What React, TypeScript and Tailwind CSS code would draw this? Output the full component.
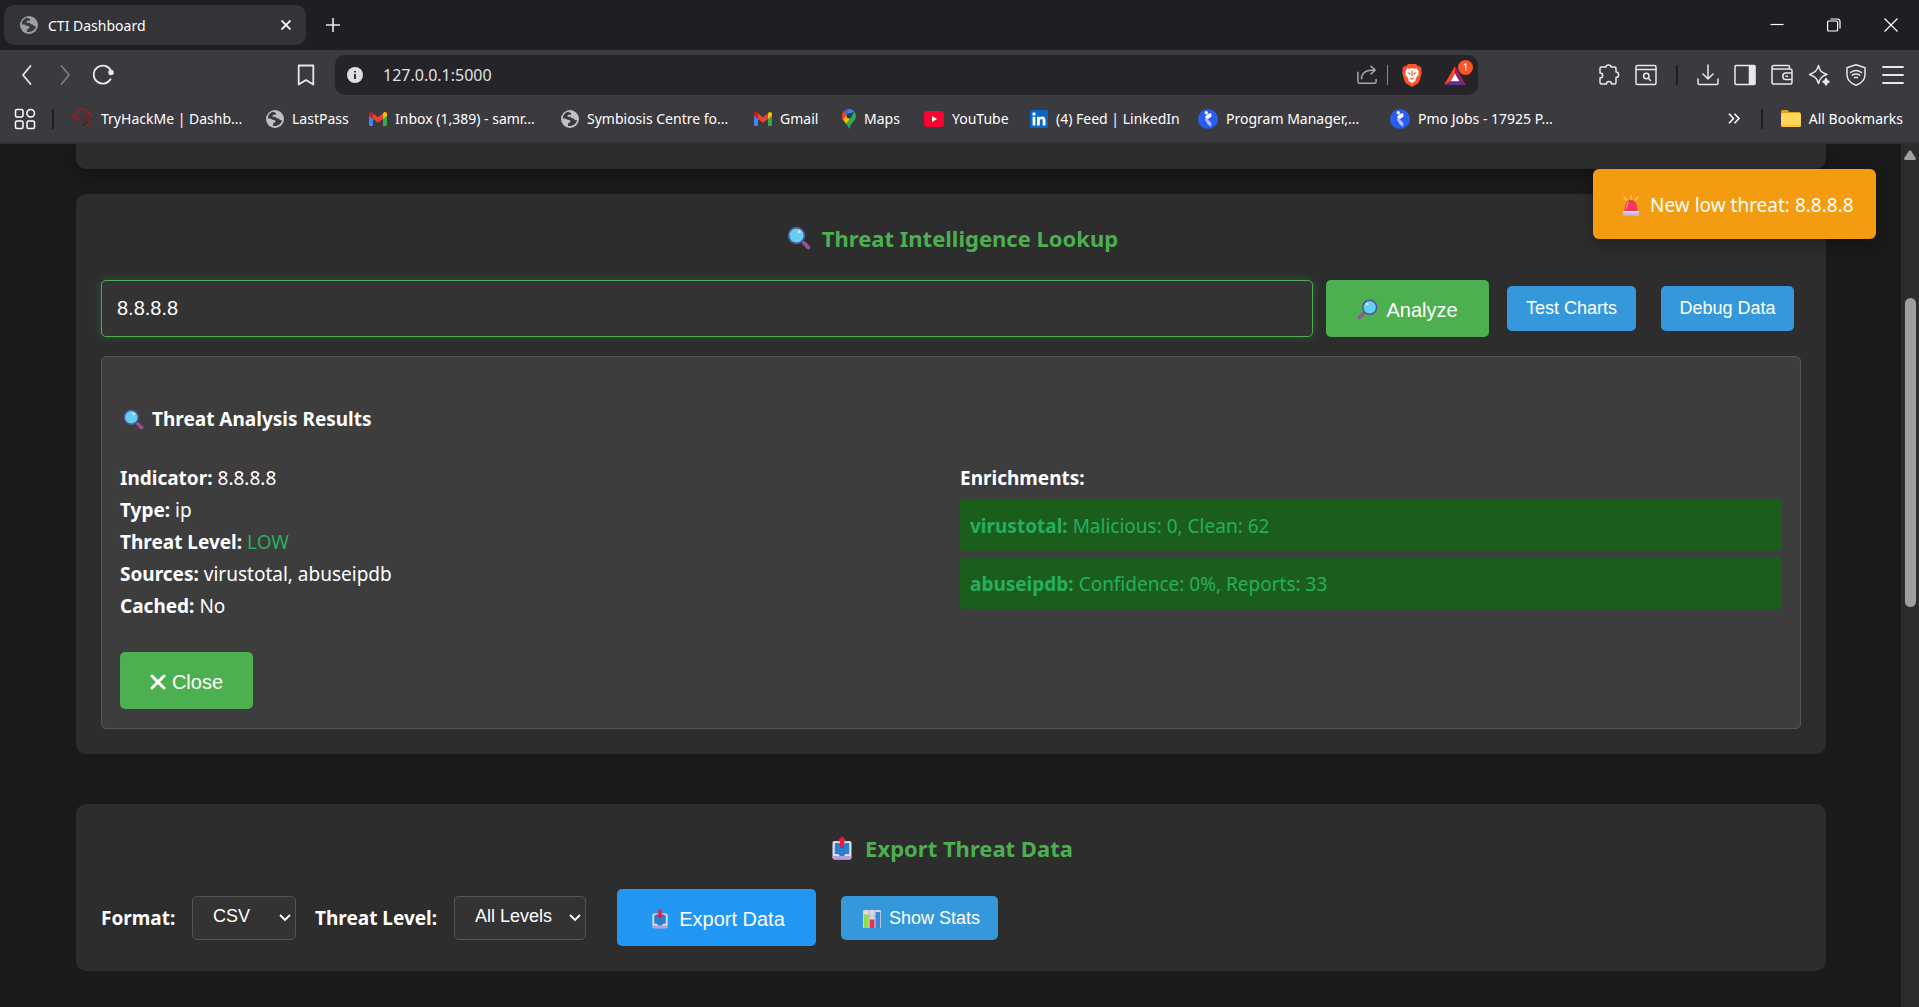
import React, { useState } from "react";

type IconProps = { className?: string };

function GlobeIcon({ className = "" }: IconProps) {
  return (
    <svg viewBox="0 0 18 18" className={`size-[18px] shrink-0 ${className}`} aria-hidden="true">
      <circle cx="9" cy="9" r="9" fill="currentColor" />
      <path
        d="M7 1.8C3.8 2.6 1.9 5.2 1.8 8.4l2.5.1 2.3 1.2 1.9.2 1 1.2-.6 1.3-1.6.6-.4 2.9c4.2.9 8.3-1.6 9.1-5.6l-2.1-.2-1.2-1.5-2-.4-1.3-1.5-2 .2L6.2 6l1.2-1.2h2.3l.6-1.5z"
        fill="#3b3a3f"
      />
      <path d="M10.5 5.2l2.4-.5 1.1 1.1-1.4 1.3-1.8-.4z" fill="currentColor" />
    </svg>
  );
}

function GmailIcon() {
  return (
    <svg viewBox="0 0 18 14" className="h-[14px] w-[18px] shrink-0" aria-hidden="true">
      <path d="M0 2v10.8C0 13.500.500 14 1.200 14H4V5z" fill="#4285f4" />
      <path d="M18 2v10.8c0 .7-.5 1.200-1.200 1.200H14V5z" fill="#34a853" />
      <path d="M4 1.400V7L0 4V2C0 .3 1.900-.6 3.300.500z" fill="#c5221f" />
      <path d="M14 1.400V7l4-3V2c0-1.700-1.900-2.600-3.300-1.500z" fill="#fbbc04" />
      <path d="M4 1.400l5 3.800 5-3.800V7l-5 3.800L4 7z" fill="#ea4335" />
    </svg>
  );
}

function MapsIcon() {
  return (
    <svg viewBox="0 0 14 20" className="h-5 w-[14px] shrink-0" aria-hidden="true">
      <path d="M7 0a7 7 0 0 0-5.400 2.500L5 5.400z" fill="#ea4335" />
      <path d="M7 0L4.600 5.600 9 4l3.500-1.200A7 7 0 0 0 7 0z" fill="#4285f4" />
      <path d="M2.200 2L7 0 4.700 5.200z" fill="#1a73e8" />
      <path d="M1.600 2.500A7 7 0 0 0 .9 10.400L5 5.400z" fill="#ea4335" />
      <path d="M.9 10.400c.7 1.300 2.100 2.800 3.300 4.600L9.500 8.500 4.800 5.800z" fill="#fbbc04" />
      <path d="M12.500 2.800c2.100 3 1.700 6.200-.5 8.900-2.300 2.800-3.700 4.700-5 8.300-.8-2.300-1.700-3.600-2.800-5z" fill="#34a853" />
      <circle cx="7" cy="7" r="2.500" fill="#253a5e" />
    </svg>
  );
}

function YouTubeIcon() {
  return (
    <svg viewBox="0 0 20 16" className="h-4 w-5 shrink-0" aria-hidden="true">
      <rect width="20" height="16" y="0" rx="3.500" fill="#ff0033" />
      <path d="M8 5l5 3-5 3z" fill="#fff" />
    </svg>
  );
}

function LinkedInIcon() {
  return (
    <svg viewBox="0 0 18 18" className="size-[18px] shrink-0" aria-hidden="true">
      <rect width="18" height="18" rx="1.500" fill="#0a66c2" />
      <circle cx="4" cy="4" r="1.700" fill="#fff" />
      <path d="M2.600 6.800h2.800v8.700H2.600zM7 6.800h2.700V8c.5-.8 1.400-1.400 2.600-1.400 2.600 0 3.200 1.700 3.200 4v4.900h-2.800v-4.300c0-1.200-.1-2.200-1.300-2.200-1.300 0-1.600 1-1.600 2.100v4.400H7z" fill="#fff" />
    </svg>
  );
}

function JobsIcon() {
  return (
    <svg viewBox="0 0 20 20" className="size-5 shrink-0" aria-hidden="true">
      <circle cx="10" cy="10" r="10" fill="#275df5" />
      <circle cx="8.300" cy="3.700" r="1.700" fill="#fff" />
      <path d="M13.300 4.300v3.400L9.800 10 7 8.300c1-2.200 3.300-3.900 6.300-4z" fill="#fff" />
      <path d="M7 8.300L9.800 10l3.500 4v3.700C9.800 16 7 13 7 8.300z" fill="#a9c0fb" />
    </svg>
  );
}

function TryHackMeIcon() {
  return (
    <svg viewBox="0 0 20 21" className="h-[21px] w-5 shrink-0" fill="none" stroke="#b3161b" aria-hidden="true">
      <path d="M7 11H4.500C-.3 10.500 0 5.500 4 5.300 4.500-.5 13-.5 14 4.500c4-.5 5.500 3.500 3.500 5.500" strokeWidth="1.300" />
      <path d="M9 9.500h3M13.500 9h3M9 12h6M17 12h2" stroke="#7b1d22" strokeWidth="1.400" />
      <path d="M11 14.500h4M9 17h3" stroke="#2c2b30" strokeWidth="1.500" />
      <path d="M16 14.500h3M13 17h4M10.500 19.500h2M15 19.500h3" stroke="#8b1a1e" strokeWidth="1.300" />
    </svg>
  );
}

function FolderIcon() {
  return (
    <svg viewBox="0 0 20 17" className="h-[17px] w-5 shrink-0" aria-hidden="true">
      <path d="M0 2C0 .9.700 0 1.800 0h4.500l2 2H18c1 0 1.600.8 1.600 1.700V7H0z" fill="#e0a210" />
      <rect y="3" width="20" height="14" rx="1.800" fill="#ffd65c" />
      <path d="M0 14.500V15c0 1.200.8 2 1.800 2h16.400c1 0 1.800-.8 1.800-2v-.5z" fill="#f6c443" />
    </svg>
  );
}

function BraveIcon() {
  return (
    <svg viewBox="0 0 20 23" className="h-[23px] w-5 shrink-0" aria-hidden="true">
      <path d="M6 0h8l1.800 1.900 2.200.3 1.800 3-.6 1.500.6 2-2.300 8.300c-.4 1.400-1.300 2.300-2.500 3.100L10 23l-5-2.900C3.800 19.300 2.900 18.400 2.500 17L.2 8.700l.6-2-.6-1.500 1.800-3 2.200-.3z" fill="#fb542b" />
      <path d="M5.500 4.300l2.300.4L10 4.200l2.200.5 2.300-.4 2.300 3.200-.6 1.900.5 1-2.400 3-.8 1.700.2 1.300L10 19.300l-3.700-2.900.2-1.300-.8-1.700-2.400-3 .5-1-.6-1.900z" fill="#fff" />
      <path d="M5.200 8.300l3.400.8-.6 2zM14.800 8.300l-3.400.8.6 2zM7.800 13.500l2.200 1 2.200-1-.9 1.900h-2.600zM9.600 6h.8l.3 5.500-.7.6-.7-.6z" fill="#fb542b" />
    </svg>
  );
}

function BatIcon() {
  return (
    <svg viewBox="0 0 22 19" className="h-[19px] w-[22px]" aria-hidden="true">
      <path d="M11 0L0 19l6.700-3.800L11 7.500z" fill="#ff4724" />
      <path d="M11 0v7.500l4.300 7.700L22 19z" fill="#9e1f63" />
      <path d="M0 19h22l-6.700-3.800H6.700z" fill="#662d91" />
      <path d="M11 7.500l4.300 7.700H6.700z" fill="#fff" />
    </svg>
  );
}

const line = {
  fill: "none",
  stroke: "currentColor",
  strokeWidth: 1.5,
  strokeLinecap: "round" as const,
  strokeLinejoin: "round" as const,
};

function LineIcon({ children, className = "size-[22px]" }: { children: React.ReactNode; className?: string }) {
  return (
    <svg viewBox="0 0 22 22" className={`shrink-0 ${className}`} aria-hidden="true" {...line}>
      {children}
    </svg>
  );
}

function MagnifierEmoji({ className = "size-6", flip = false }: { className?: string; flip?: boolean }) {
  return (
    <svg viewBox="0 0 24 24" className={`shrink-0 ${className}`} aria-hidden="true">
      <g transform={flip ? "translate(24 0) scale(-1 1)" : undefined}>
        <path d="M14.800 14.800l2 2" stroke="#533566" strokeWidth="2.500" />
        <path d="M17 17l4.300 4.300" stroke="#965190" strokeWidth="4" strokeLinecap="round" />
        <circle cx="9.500" cy="9.500" r="8" fill="#66cff0" stroke="#54529b" strokeWidth="1.800" />
        <circle cx="12.300" cy="5.700" r="1.500" fill="#c9efff" />
      </g>
    </svg>
  );
}

function TrayEmoji({ className, down = false }: { className: string; down?: boolean }) {
  return (
    <svg viewBox="0 0 20 24" className={`shrink-0 ${className}`} aria-hidden="true">
      <rect x=".5" y="5" width="19" height="18.500" rx="2" fill="#e3dcee" />
      <path d="M.5 20h19v1.500a2 2 0 0 1-2 2h-15a2 2 0 0 1-2-2z" fill="#b9a0d2" />
      <path d="M2.800 7h14.400v11h-3.500l-1.700 2H8l-1.700-2H2.800z" fill="#2482d4" />
      {down ? (
        <path d="M8 0h4v6.500h3L10 12 5 6.500h3z" fill="#dc2148" />
      ) : (
        <path d="M10 0l4.600 5.500H12v6.700H8V5.500H5.400z" fill="#dc2148" />
      )}
    </svg>
  );
}

function ChartEmoji() {
  return (
    <svg viewBox="0 0 18 18" className="size-[18px] shrink-0" aria-hidden="true">
      <rect width="18" height="18" rx="1" fill="#ded5e4" />
      <path d="M0 6h18M0 12h18M6.200 0v18M12 0v18" stroke="#b7abc4" strokeWidth=".8" />
      <rect x="1" y="4.500" width="4.600" height="13.500" fill="#93dd48" />
      <rect x="6.800" y="9.500" width="4.600" height="8.500" fill="#e0335f" />
      <rect x="12.600" y="2" width="4.600" height="16" fill="#3289d8" />
    </svg>
  );
}

function SirenEmoji() {
  return (
    <svg viewBox="0 0 18 21" className="h-[21px] w-[18px] shrink-0" aria-hidden="true">
      <path d="M9 .5v3M2 2l2.500 3M16 2l-2.500 3" stroke="#fcd34d" strokeWidth="1.300" strokeLinecap="round" />
      <path d="M3.500 9.500C4 6.500 6 5 9 5s5 1.500 5.500 4.500L16 17H2z" fill="#f8355c" />
      <path d="M6 7.500C5 9 4.800 11 4.600 13" stroke="#ff8494" strokeWidth="1.500" fill="none" strokeLinecap="round" />
      <rect x="1" y="16" width="16" height="4.500" rx=".8" fill="#cdb6e8" />
      <rect x="1" y="16" width="16" height="1.500" fill="#f0e4fa" />
    </svg>
  );
}

const bookmarks = [
  { label: "TryHackMe | Dashb...", icon: <TryHackMeIcon />, width: "w-[193px]" },
  { label: "LastPass", icon: <GlobeIcon className="text-[#bdc1c6]" />, width: "w-[103px]" },
  { label: "Inbox (1,389) - samr...", icon: <GmailIcon />, width: "w-[192px]" },
  { label: "Symbiosis Centre fo...", icon: <GlobeIcon className="text-[#bdc1c6]" />, width: "w-[193px]" },
  { label: "Gmail", icon: <GmailIcon />, width: "w-[88px]" },
  { label: "Maps", icon: <MapsIcon />, width: "w-[82px]" },
  { label: "YouTube", icon: <YouTubeIcon />, width: "w-[106px]" },
  { label: "(4) Feed | LinkedIn", icon: <LinkedInIcon />, width: "w-[168px]" },
  { label: "Program Manager,...", icon: <JobsIcon />, width: "w-[192px]" },
  { label: "Pmo Jobs - 17925 P...", icon: <JobsIcon />, width: "w-[192px]" },
];

function BrowserChrome() {
  return (
    <header className="shrink-0 text-[#e8e8ea]">
      <div className="flex h-[50px] items-center bg-[#1f1e23]">
        <div className="ml-1 flex h-10 w-[302px] items-center rounded-[10px] bg-[#343338] pr-3 pl-4">
          <GlobeIcon className="text-[#9aa0a6]" />
          <span className="ml-[10px] flex-1 text-[14px] text-white">CTI Dashboard</span>
          <button aria-label="Close tab" className="flex size-4 items-center justify-center">
            <svg viewBox="0 0 10 10" className="size-[10px]" stroke="#fff" strokeWidth="1.800"><path d="M.5.500l9 9M9.500.500l-9 9" /></svg>
          </button>
        </div>
        <button aria-label="New tab" className="ml-5 flex size-[14px] items-center justify-center">
          <svg viewBox="0 0 14 14" className="size-[14px]" stroke="currentColor" strokeWidth="1.600"><path d="M7 0v14M0 7h14" /></svg>
        </button>
        <div className="mr-[21px] ml-auto flex items-center gap-[43px]">
          <button aria-label="Minimize"><svg viewBox="0 0 14 14" className="size-[14px]" stroke="#fff" strokeWidth="1.200"><path d="M.5 6.500h13" /></svg></button>
          <button aria-label="Restore">
            <svg viewBox="0 0 14 14" className="size-[14px]" fill="none" stroke="#fff" strokeWidth="1.200">
              <rect x=".6" y="3" width="10" height="10" rx="1" />
              <path d="M3.500 1h7A2.500 2.500 0 0 1 13 3.500v7" />
            </svg>
          </button>
          <button aria-label="Close window"><svg viewBox="0 0 14 14" className="size-[14px]" stroke="#fff" strokeWidth="1.200"><path d="M.5.500l13 13M13.500.500l-13 13" /></svg></button>
        </div>
      </div>

      <div className="flex h-[50px] items-center bg-[#3b3a3f]">
        <div className="ml-4 flex w-[319px] items-center gap-4">
          <button aria-label="Back"><LineIcon><path d="M14.500 2L7 11l7.500 9" strokeWidth="1.800" /></LineIcon></button>
          <button aria-label="Forward" className="text-[#7d7c81]"><LineIcon><path d="M7.500 2l7.500 9-7.500 9" strokeWidth="1.800" /></LineIcon></button>
          <button aria-label="Reload">
            <LineIcon>
              <path d="M18.500 15.200A9 9 0 1 1 19 7" strokeWidth="1.800" />
              <circle cx="19" cy="8.500" r="2" fill="currentColor" />
            </LineIcon>
          </button>
          <button aria-label="Bookmark this page" className="mr-[18px] ml-auto"><LineIcon><path d="M3.700 1.500h14.600v19L11 16l-7.300 4.500z" strokeWidth="1.800" /></LineIcon></button>
        </div>
        <div className="flex h-10 min-w-0 flex-1 items-center rounded-[10px] bg-[#252429] pl-3">
          <svg viewBox="0 0 16 16" className="size-4 shrink-0" aria-hidden="true">
            <circle cx="8" cy="8" r="8" fill="#dfdfe3" />
            <path d="M8 7v5M8 4v1.600" stroke="#252429" strokeWidth="1.800" />
          </svg>
          <input
            aria-label="Address"
            defaultValue="127.0.0.1:5000"
            className="ml-5 min-w-0 flex-1 bg-transparent text-[16px] text-[#e0e0e4] outline-none"
          />
          <button aria-label="Share" className="text-[#a6a5aa]">
            <LineIcon className="size-5"><path d="M1 8v10.500c0 1 .6 1.500 1.500 1.500h17c1 0 1.500-.6 1.500-1.500V16M5 15c0-6 4-9.500 14.500-9.500M15.500 1.500l4.500 4-4.500 4.300" strokeWidth="1.700" /></LineIcon>
          </button>
          <span className="ml-[10px] h-5 w-px bg-[#8b8a8f]" />
          <button aria-label="Brave Shields" className="ml-[14px]"><BraveIcon /></button>
          <button aria-label="Brave Rewards" className="relative mr-3 ml-[22px]">
            <BatIcon />
            <span className="absolute -top-[6px] -right-[7px] flex size-[15px] items-center justify-center rounded-full bg-[#fb542b] text-[10px] text-white">1</span>
          </button>
        </div>
        <div className="mr-[15px] ml-[120px] flex items-center gap-[15px]">
          <button aria-label="Extensions">
            <LineIcon>
              <path d="M2 4.500c0-1 .6-1.500 1.500-1.500H8c0-2.700 5-2.700 5 0h3.500c1 0 1.500.5 1.500 1.500V8c3.500 0 3.500 5.500 0 5.500v5c0 1-.5 1.500-1.500 1.500h-3c0-3.500-5-3.500-5 0H3.500c-1 0-1.500-.5-1.500-1.500V14c3.500 0 3.500-5 0-5z" />
            </LineIcon>
          </button>
          <button aria-label="Search tabs">
            <LineIcon>
              <rect x="1" y="1.500" width="20" height="19" rx="1.500" />
              <path d="M1 5.500h20M13.500 14.500l2 2" />
              <circle cx="11.300" cy="12" r="2.700" />
            </LineIcon>
          </button>
          <span className="mx-1 h-5 w-[2px] bg-[#1f1e23]" />
          <button aria-label="Downloads"><LineIcon><path d="M11 1v14M6 10l5 5 5-5M1 15v4c0 1 .5 1.500 1.500 1.500h17c1 0 1.500-.5 1.500-1.500v-4" /></LineIcon></button>
          <button aria-label="Sidebar">
            <LineIcon><rect x="1" y="1.500" width="20" height="19" rx="1" /><path d="M15.500 2h5v18h-5z" fill="currentColor" /></LineIcon>
          </button>
          <button aria-label="Wallet">
            <LineIcon>
              <path d="M18.500 5V3c0-1-.5-1.500-1.500-1.500H3C.3 1.500.3 5 3 5h16c1.200 0 2 .7 2 1.800v11.400c0 1.300-.7 1.800-1.800 1.800H3c-1.200 0-2-.7-2-1.800V3.500M21 9h-6.500C11 9 11 15.500 14.500 15.500H21zM15 12.200h1.500" />
            </LineIcon>
          </button>
          <button aria-label="Leo AI">
            <LineIcon>
              <path d="M10.500 1.500c1.200 5.500 2.500 7 8.500 9-2.500.7-4 1.500-5 2.500-1.700 1.500-2.500 3-3.500 6.500C9 14 7 12.500 1.500 10.500 7 8.500 9 7 10.500 1.500z" />
              <path d="M18 14.500c.5 2 1 2.500 3 3.200-2 .7-2.500 1.300-3 3.300-.5-2-1-2.600-3-3.300 2-.7 2.500-1.200 3-3.200z" fill="currentColor" />
            </LineIcon>
          </button>
          <button aria-label="VPN">
            <LineIcon>
              <path d="M11 .8l9 3v6.700c0 5-4 9-9 10.700-5-1.700-9-5.700-9-10.700V3.800z" />
              <path d="M5.500 8.500c3.500-2.500 7.500-2.500 11 0M7.200 11.200c2.500-1.500 5-1.500 7.600 0M9.500 13.700c1-.6 2-.6 3 0" />
            </LineIcon>
          </button>
          <button aria-label="Menu"><LineIcon><path d="M1 3h20M1 11h20M1 19h20" strokeWidth="1.900" /></LineIcon></button>
        </div>
      </div>

      <nav className="flex h-11 items-center border-b-2 border-[#323137] bg-[#3b3a3f] pb-[5px] text-[14px] text-white">
        <button aria-label="Apps" className="ml-[14px]">
          <LineIcon>
            <rect x="1.500" y="1.500" width="7.500" height="7.500" rx="1.500" />
            <circle cx="16.700" cy="5.300" r="3.800" />
            <rect x="1.500" y="13" width="7.500" height="7.500" rx="1.500" />
            <rect x="13" y="13" width="7.500" height="7.500" rx="1.500" />
          </LineIcon>
        </button>
        <span className="mr-[19px] ml-4 h-5 w-[2px] bg-[#1f1e23]" />
        {bookmarks.map((b) => (
          <a key={b.label} href="#" className={`flex shrink-0 items-center gap-2 whitespace-nowrap ${b.width}`}>
            {b.icon}
            {b.label}
          </a>
        ))}
        <button aria-label="More bookmarks" className="ml-auto">
          <svg viewBox="0 0 12 11" className="h-[11px] w-3" fill="none" stroke="#fff" strokeWidth="1.600"><path d="M1 .8l4.500 4.700L1 10.200M6.500.800L11 5.500l-4.500 4.700" /></svg>
        </button>
        <span className="mr-[18px] ml-[21px] h-5 w-[2px] bg-[#1f1e23]" />
        <a href="#" className="mr-4 flex items-center gap-2 whitespace-nowrap">
          <FolderIcon />
          All Bookmarks
        </a>
      </nav>
    </header>
  );
}

function Select({ id, options, width }: { id: string; options: string[]; width: string }) {
  return (
    <div className={`relative ${width}`}>
      <select
        id={id}
        className="h-11 w-full appearance-none rounded-[5px] border border-[#555] bg-[#333] pb-[2px] pl-5 font-['Liberation_Sans',sans-serif] text-[18px] font-normal text-white outline-none"
      >
        {options.map((o) => (
          <option key={o}>{o}</option>
        ))}
      </select>
      <svg viewBox="0 0 12 8" className="pointer-events-none absolute top-[18px] right-[5px] h-2 w-3" fill="none" stroke="#fff" strokeWidth="1.800" aria-hidden="true">
        <path d="M1 1l5 5 5-5" />
      </svg>
    </div>
  );
}

const button = "flex items-center justify-center rounded-[5px] font-['Liberation_Sans',sans-serif] text-white whitespace-nowrap";

function Field({ name, children }: { name: string; children: React.ReactNode }) {
  return (
    <p>
      <strong>{name}:</strong> {children}
    </p>
  );
}

function LookupCard() {
  const [indicator, setIndicator] = useState("8.8.8.8");
  return (
    <section className="rounded-[10px] bg-[#2d2d2d] p-[25px]">
      <h2 className="mt-[3px] flex items-center justify-center gap-[11px] pl-[3px] text-[22px] leading-8 font-bold text-[#4caf50]">
        <MagnifierEmoji />
        Threat Intelligence Lookup
      </h2>
      <div className="mt-[26px] flex items-center pr-[7px]">
        <input
          aria-label="Indicator"
          value={indicator}
          onChange={(e) => setIndicator(e.target.value)}
          className="h-[57px] min-w-0 flex-1 rounded-[5px] border border-[#4caf50] bg-[#333] px-[15px] font-['Liberation_Sans',sans-serif] text-[20px] text-white shadow-[0_0_10px_rgba(76,175,80,0.3)] outline-none"
        />
        <button className={`${button} ml-[13px] h-[57px] w-[163px] gap-2 bg-[#4caf50] pt-[2px] text-[20px]`}>
          <MagnifierEmoji flip className="size-[21px]" />
          Analyze
        </button>
        <button className={`${button} ml-[18px] h-[45px] w-[129px] bg-[#3498db] text-[18px]`}>Test Charts</button>
        <button className={`${button} ml-[25px] h-[45px] w-[133px] bg-[#3498db] text-[18px]`}>Debug Data</button>
      </div>

      <div className="mt-[19px] rounded-[5px] border border-[#555] bg-[#3d3d3d] px-[18px] pt-[46px] pb-[19px] text-[19px] leading-8 text-white">
        <h3 className="ml-[3px] flex items-center gap-2 font-bold">
          <MagnifierEmoji className="size-[21px]" />
          Threat Analysis Results
        </h3>
        <div className="mt-[27px] grid grid-cols-2 gap-[18px]">
          <div>
            <Field name="Indicator">8.8.8.8</Field>
            <Field name="Type">ip</Field>
            <Field name="Threat Level"><span className="text-[#27ae60]">LOW</span></Field>
            <Field name="Sources">virustotal, abuseipdb</Field>
            <Field name="Cached">No</Field>
          </div>
          <div>
            <p className="mb-[5px] font-bold">Enrichments:</p>
            <div className="flex flex-col gap-[6px] text-[#27ae60]">
              <div className="rounded-[4px] bg-[#1b5e1b] px-[10px] pt-[11px] pb-[9px]"><Field name="virustotal">Malicious: 0, Clean: 62</Field></div>
              <div className="rounded-[4px] bg-[#1b5e1b] px-[10px] pt-[11px] pb-[9px]"><Field name="abuseipdb">Confidence: 0%, Reports: 33</Field></div>
            </div>
          </div>
        </div>
        <button className={`${button} mt-[30px] h-[57px] w-[133px] gap-[6px] bg-[#4caf50] pt-[2px] text-[20px]`}>
          <svg viewBox="0 0 16 16" className="size-4" stroke="#fff" strokeWidth="3" strokeLinecap="round" aria-hidden="true"><path d="M2 2l12 12M14 2L2 14" /></svg>
          Close
        </button>
      </div>
    </section>
  );
}

function ExportCard() {
  return (
    <section className="rounded-[10px] bg-[#2d2d2d] p-[25px]">
      <h2 className="mt-[3px] flex items-center justify-center gap-[13px] pl-[3px] text-[22px] leading-8 font-bold text-[#4caf50]">
        <TrayEmoji className="h-6 w-5" />
        Export Threat Data
      </h2>
      <div className="mt-[25px] flex items-center text-[19px] font-bold text-white">
        <label htmlFor="format" className="w-[91px] pt-[2px]">Format:</label>
        <Select id="format" options={["CSV", "JSON"]} width="w-[104px]" />
        <label htmlFor="level" className="ml-[19px] w-[139px] pt-[2px] whitespace-nowrap">Threat Level:</label>
        <Select id="level" options={["All Levels", "High", "Medium", "Low"]} width="w-[132px]" />
        <button className={`${button} ml-[31px] h-[57px] w-[199px] gap-[11px] bg-[#2196f3] pt-[2px] pl-1 text-[20px] font-normal`}>
          <TrayEmoji down className="h-5 w-4" />
          Export Data
        </button>
        <button className={`${button} ml-[25px] h-11 w-[157px] gap-2 bg-[#3498db] pt-[2px] pl-1 text-[18px] font-normal`}>
          <ChartEmoji />
          Show Stats
        </button>
      </div>
    </section>
  );
}

export default function App() {
  return (
    <div className="flex h-screen flex-col overflow-hidden bg-[#1a1a1a] font-['Noto_Sans',sans-serif]">
      <BrowserChrome />
      <div className="relative flex min-h-0 flex-1">
        <main className="min-w-0 flex-1 overflow-hidden px-[75px] pl-[76px]">
          <div className="h-[25px] rounded-b-[10px] bg-[#2d2d2d] shadow-[0_5px_12px_rgba(0,0,0,0.3)]" />
          <div className="mt-[25px] flex flex-col gap-[50px]">
            <LookupCard />
            <ExportCard />
          </div>
        </main>
        <div className="flex w-[18px] shrink-0 flex-col items-center bg-[#2c2c2c]">
          <svg viewBox="0 0 12 10" className="mt-[6px] h-[10px] w-3" fill="#9f9f9f" aria-hidden="true"><path d="M5 .8q1-1.200 2 0l4.700 7.200q.6 2-1 2H1.300q-1.600 0-1-2z" /></svg>
          <div className="mt-[138px] h-[309px] w-[11px] rounded-full bg-[#9f9f9f]" />
        </div>
        <div role="status" className="absolute top-[25px] right-[43px] flex h-[70px] w-[283px] items-center gap-[10px] rounded-[6px] bg-[#f39c12] pt-[2px] pl-[29px] text-[19px] whitespace-nowrap text-white shadow-[0_5px_15px_rgba(0,0,0,0.3)]">
          <SirenEmoji />
          New low threat: 8.8.8.8
        </div>
      </div>
    </div>
  );
}
